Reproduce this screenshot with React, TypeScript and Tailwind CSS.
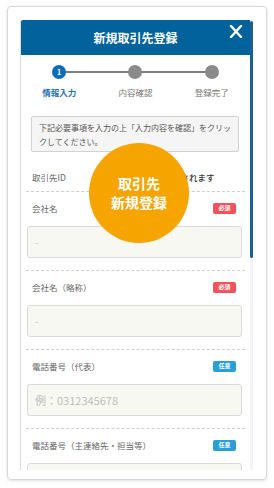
const fields = [
  { label: "会社名", badge: "必須", placeholder: "-" },
  { label: "会社名（略称）", badge: "必須", placeholder: "-" },
  { label: "電話番号（代表）", badge: "任意", placeholder: "例：0312345678" },
  { label: "電話番号（主連絡先・担当等）", badge: "任意", placeholder: "" },
];

const steps = [
  { no: "1", label: "情報入力", active: true },
  { no: "", label: "内容確認", active: false },
  { no: "", label: "登録完了", active: false },
];

const Badge = ({ text }: { text: string }) => (
  <span
    className={`flex h-[11px] w-[23px] items-center justify-center rounded-[2px] text-[6px] font-bold leading-none text-white ${
      text === "必須" ? "bg-[#f1525a]" : "bg-[#299fd9]"
    }`}
  >
    {text}
  </span>
);

const App = () => {
  return (
    <div className="min-h-[488px] bg-white px-[7px] pt-[6px] font-['Noto_Sans_CJK_JP','Noto_Sans',sans-serif]">
      <div className="h-[474px] rounded-[4px] border border-[#d6d6d6] pb-[9px] pl-[12px] pr-[13px] pt-[13px] shadow-[0_1px_3px_rgba(0,0,0,0.12)]">
        <div className="flex h-full">
          {/* modal */}
          <div className="relative flex-1 overflow-hidden border-l border-[#dcdcdc]">
            <div className="relative flex h-[35px] items-center justify-center rounded-tl-[2px] bg-[#02629c]">
              <span className="text-[12px] font-bold leading-none text-white">新規取引先登録</span>
              <svg
                className="absolute right-[7px] top-[5px]"
                width="14"
                height="13"
                viewBox="0 0 14 13"
              >
                <path d="M2 1 L12 12 M12 1 L2 12" stroke="white" strokeWidth="2.4" strokeLinecap="round" />
              </svg>
            </div>

            <div className="relative mt-[10px] grid grid-cols-3">
              <div className="absolute left-[38px] right-[38px] top-[6px] h-[2px] bg-[#7d7d7d]" />
              {steps.map((s) => (
                <div key={s.label} className="relative flex flex-col items-center">
                  <div
                    className={`flex h-[14px] w-[14px] items-center justify-center rounded-full text-[7px] font-bold text-white ${
                      s.active ? "bg-[#0b6db5]" : "bg-[#8a8a8a]"
                    }`}
                  >
                    {s.no}
                  </div>
                  <span
                    className={`mt-[8px] text-[8.5px] leading-[10px] ${
                      s.active ? "font-bold text-[#1f6fb0]" : "text-[#777]"
                    }`}
                  >
                    {s.label}
                  </span>
                </div>
              ))}
            </div>

            <div className="ml-[10px] mr-[11px] mt-[19px] rounded-[2px] border border-[#d2d2d2] bg-[#f5f5f5] px-[7px] pb-[2px] pt-[4px] text-[8px] leading-[14px] text-[#555]">
              下記必要事項を入力の上「入力内容を確認」をクリックしてください。
            </div>

            <div className="mx-[5px]">
              <div className="flex border-b border-dashed border-[#cfcfcf] pb-[8px] pl-[6px] pt-[19px] text-[8.5px] leading-[12px]">
                <span className="w-[72px] text-[#666]">取引先ID</span>
                <span className="font-medium text-[#333]">登録時に自動で採番されます</span>
              </div>

              {fields.map((f) => (
                <div key={f.label} className="border-b border-dashed border-[#cfcfcf] pt-[10px]">
                  <div className="flex h-[12px] items-center justify-between pl-[6px] pr-[9px]">
                    <span className="text-[8.5px] leading-[12px] text-[#666]">{f.label}</span>
                    <Badge text={f.badge} />
                  </div>
                  <div className="mb-[12px] ml-[1px] mr-[3px] mt-[12px] flex h-[32px] items-center rounded-[3px] border border-[#dadada] bg-[#f8f8f2] px-[7px]">
                    <span
                      className={`leading-none text-[#bdbdbd] ${
                        f.placeholder === "-" ? "text-[9px]" : "text-[11px]"
                      }`}
                    >
                      {f.placeholder}
                    </span>
                  </div>
                </div>
              ))}
            </div>

            <div className="absolute left-[68px] top-[123px] flex h-[100px] w-[100px] flex-col items-center justify-center rounded-full bg-[#f6a500] text-[14px] font-bold leading-[19px] text-white">
              <span>取引先</span>
              <span>新規登録</span>
            </div>
          </div>

          {/* scrollbar */}
          <div className="flex w-[3px] flex-col bg-[#f1f3f6]">
            <div className="mt-[1px] h-[237px] rounded-full bg-[#1c5f94]" />
          </div>
        </div>
      </div>
    </div>
  );
};

export default App;
